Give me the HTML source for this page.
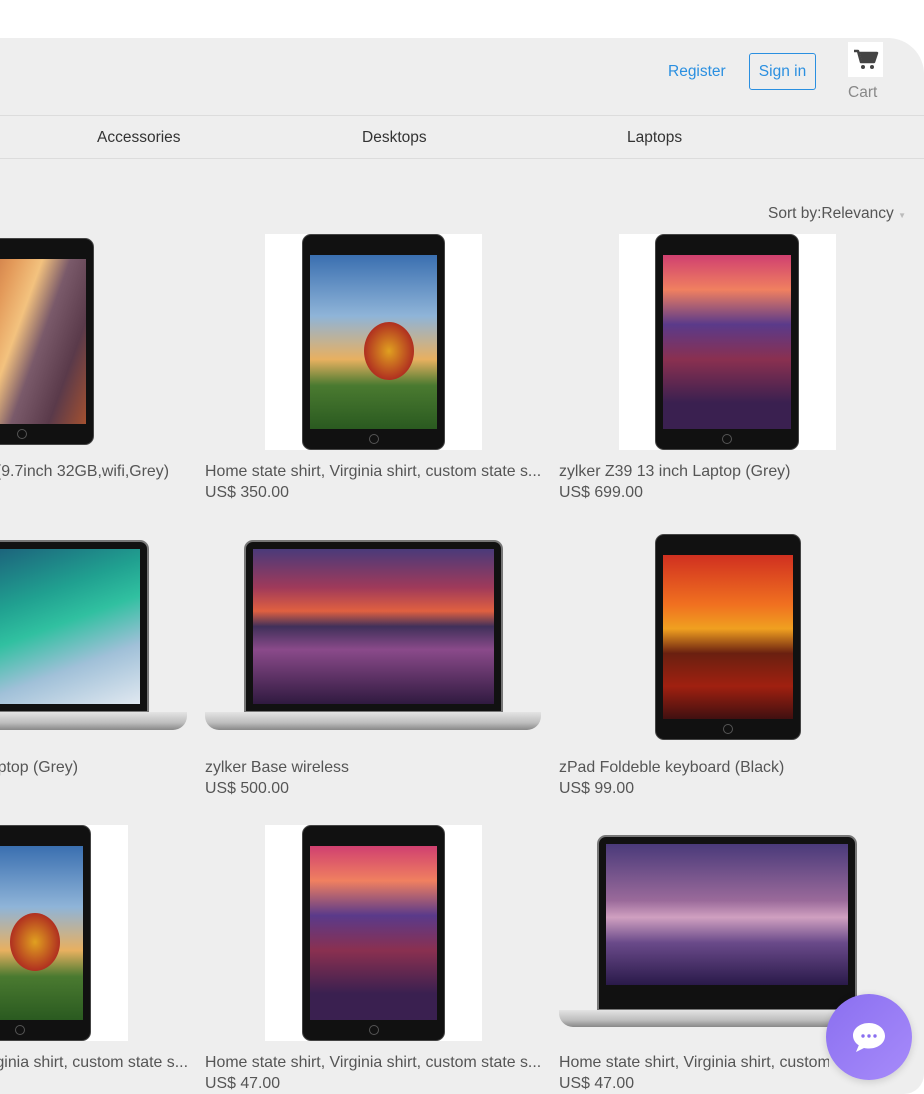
<!DOCTYPE html>
<html><head><meta charset="utf-8"><style>
*{margin:0;padding:0;box-sizing:border-box}
html,body{width:924px;height:1094px;overflow:hidden}
body{background:#fff;position:relative;font-family:"Liberation Sans",Helvetica,Arial,sans-serif}
.wrap{position:absolute;left:0;top:0;width:924px;height:1094px;overflow:hidden}
.panel{position:absolute;left:0;top:38px;width:924px;height:1056px;background:#eeeeee;border-top-right-radius:36px;border-bottom-right-radius:20px}
.a{position:absolute}
.hl{position:absolute;left:0;width:924px;height:1px;background:#dcdcdc}
.nav{position:absolute;top:129px;font-size:15.5px;color:#333}
.t{position:absolute;font-size:15.9px;color:#555;white-space:nowrap}
.p{position:absolute;font-size:15.9px;color:#555;white-space:nowrap}
.wb{position:absolute;background:#fff}
.tab{position:absolute;background:#111;border-radius:9px;border:1px solid #444}
.tab .s{position:absolute;left:7px;right:7px;top:20px;bottom:20px}
.tab .h{position:absolute;left:50%;bottom:5px;width:10px;height:10px;margin-left:-5px;border:1px solid #555;border-radius:50%}
.lap .f{position:absolute;background:#111;border:2px solid #777;border-radius:9px 9px 0 0}
.lap .f .s{position:absolute;left:7px;right:7px;top:7px;bottom:7px}
.lap .b{position:absolute;background:linear-gradient(#e4e4e4,#bdbdbd 60%,#888);border-radius:0 0 14px 14px}
</style></head><body><div class="wrap">
<div class="panel"></div>
<div class="a" style="left:668px;top:63px;font-size:15.5px;color:#2a8fe0">Register</div>
<div class="a" style="left:749px;top:53px;width:67px;height:37px;border:1px solid #2a8fe0;border-radius:3px;font-size:15.5px;color:#2a8fe0;text-align:center;line-height:36px">Sign in</div>
<div class="a" style="left:848px;top:42px;width:35px;height:35px;background:#fff">
<svg width="35" height="35" viewBox="0 0 35 35"><path d="M6 9h4l3 11h13l3-9H11" fill="none" stroke="#444" stroke-width="2.5" stroke-linejoin="round"/><path d="M12 12h16l-3 8H14z" fill="#444"/><circle cx="15" cy="25" r="2" fill="#444"/><circle cx="24" cy="25" r="2" fill="#444"/></svg></div>
<div class="a" style="left:848px;top:84px;font-size:15.5px;color:#888">Cart</div>
<div class="hl" style="top:115px"></div>
<div class="hl" style="top:158px"></div>
<div class="nav" style="left:97px">Accessories</div>
<div class="nav" style="left:362px">Desktops</div>
<div class="nav" style="left:627px">Laptops</div>
<div class="a" style="left:768px;top:205px;font-size:15.5px;color:#555;white-space:nowrap">Sort by:Relevancy <span style="font-size:8px;color:#bbb">▼</span></div>

<div class="tab" style="left:-50px;top:238px;width:144px;height:207px"><div class="s" style="background:linear-gradient(110deg,#b0502a,#e39a5a 30%,#f3c27e 45%,#7a5a6a 60%,#5a3a4a 80%,#a35030)"></div><div class="h"></div></div>
<div class="wb" style="left:265px;top:234px;width:217px;height:216px"></div>
<div class="tab" style="left:302px;top:234px;width:143px;height:216px"><div class="s" style="background:linear-gradient(#3a6fb0,#8fb4d8 35%,#e8b060 60%,#4a7a30 75%,#2a5a20)"></div><div class="h"></div></div>
<div class="a" style="left:364px;top:322px;width:50px;height:58px;border-radius:50%;background:radial-gradient(#e0a020,#b03020 70%)"></div>
<div class="wb" style="left:619px;top:234px;width:217px;height:216px"></div>
<div class="tab" style="left:655px;top:234px;width:144px;height:216px"><div class="s" style="background:linear-gradient(#d04070,#f08060 20%,#5a3a8a 40%,#8a3050 60%,#3a2050 85%)"></div><div class="h"></div></div>
<div class="t" style="right:755px;top:463px">Home state shirt, Virginia (9.7inch 32GB,wifi,Grey)</div>
<div class="t" style="left:205px;top:463px">Home state shirt, Virginia shirt, custom state s...</div>
<div class="p" style="left:205px;top:484px">US$ 350.00</div>
<div class="t" style="left:559px;top:463px">zylker Z39 13 inch Laptop (Grey)</div>
<div class="p" style="left:559px;top:484px">US$ 699.00</div>

<div class="lap">
<div class="f" style="left:-110px;top:540px;width:259px;height:173px"><div class="s" style="background:linear-gradient(160deg,#1a4070,#20a090 40%,#30c0a0 55%,#a0c0d8 75%,#e0e8f0)"></div></div>
<div class="b" style="left:-149px;top:712px;width:336px;height:18px"></div></div>
<div class="lap">
<div class="f" style="left:244px;top:540px;width:259px;height:173px"><div class="s" style="background:linear-gradient(#4a3a7a,#a03a5a 25%,#e06040 40%,#40305a 50%,#8a4a8a 65%,#301a40)"></div></div>
<div class="b" style="left:205px;top:712px;width:336px;height:18px"></div></div>
<div class="tab" style="left:655px;top:534px;width:146px;height:206px"><div class="s" style="background:linear-gradient(#d03020,#f07020 30%,#f0a020 45%,#6a2010 60%,#a02010 80%,#401010)"></div><div class="h"></div></div>
<div class="t" style="right:846px;top:759px">zylker Z39 13 inch Laptop (Grey)</div>
<div class="t" style="left:205px;top:759px">zylker Base wireless</div>
<div class="p" style="left:205px;top:780px">US$ 500.00</div>
<div class="t" style="left:559px;top:759px">zPad Foldeble keyboard (Black)</div>
<div class="p" style="left:559px;top:780px">US$ 99.00</div>

<div class="wb" style="left:-89px;top:825px;width:217px;height:216px"></div>
<div class="tab" style="left:-52px;top:825px;width:143px;height:216px"><div class="s" style="background:linear-gradient(#3a6fb0,#8fb4d8 35%,#e8b060 60%,#4a7a30 75%,#2a5a20)"></div><div class="h"></div></div>
<div class="a" style="left:10px;top:913px;width:50px;height:58px;border-radius:50%;background:radial-gradient(#e0a020,#b03020 70%)"></div>
<div class="wb" style="left:265px;top:825px;width:217px;height:216px"></div>
<div class="tab" style="left:302px;top:825px;width:143px;height:216px"><div class="s" style="background:linear-gradient(#d04070,#f08060 20%,#5a3a8a 40%,#8a3050 60%,#3a2050 85%)"></div><div class="h"></div></div>
<div class="lap">
<div class="f" style="left:597px;top:835px;width:260px;height:176px"><div class="s" style="bottom:24px;background:linear-gradient(#4a3a7a,#9a6a9a 40%,#d0a0c0 52%,#6a4a8a 70%,#2a1a4a)"></div></div>
<div class="b" style="left:559px;top:1010px;width:308px;height:17px"></div></div>
<div class="t" style="right:736px;top:1054px">Home state shirt, Virginia shirt, custom state s...</div>
<div class="t" style="left:205px;top:1054px">Home state shirt, Virginia shirt, custom state s...</div>
<div class="p" style="left:205px;top:1075px">US$ 47.00</div>
<div class="t" style="left:559px;top:1054px;width:270px;overflow:hidden">Home state shirt, Virginia shirt, custom state s...</div>
<div class="p" style="left:559px;top:1075px">US$ 47.00</div>

<div class="a" style="left:826px;top:994px;width:86px;height:86px;border-radius:50%;background:linear-gradient(135deg,#8a6ff0,#a78bfa);box-shadow:0 2px 8px rgba(0,0,0,.15)">
<svg width="86" height="86" viewBox="0 0 86 86"><path d="M43 29c-9 0-16 5.5-16 12.5 0 4 2.2 7.5 5.8 9.8L30 58l8-4c1.6.4 3.3.5 5 .5 9 0 16-5.5 16-12.5S52 29 43 29z" fill="#fff"/><circle cx="37" cy="42" r="1.7" fill="#8a6ff0"/><circle cx="43" cy="42" r="1.7" fill="#8a6ff0"/><circle cx="49" cy="42" r="1.7" fill="#8a6ff0"/></svg></div>
</div></body></html>
